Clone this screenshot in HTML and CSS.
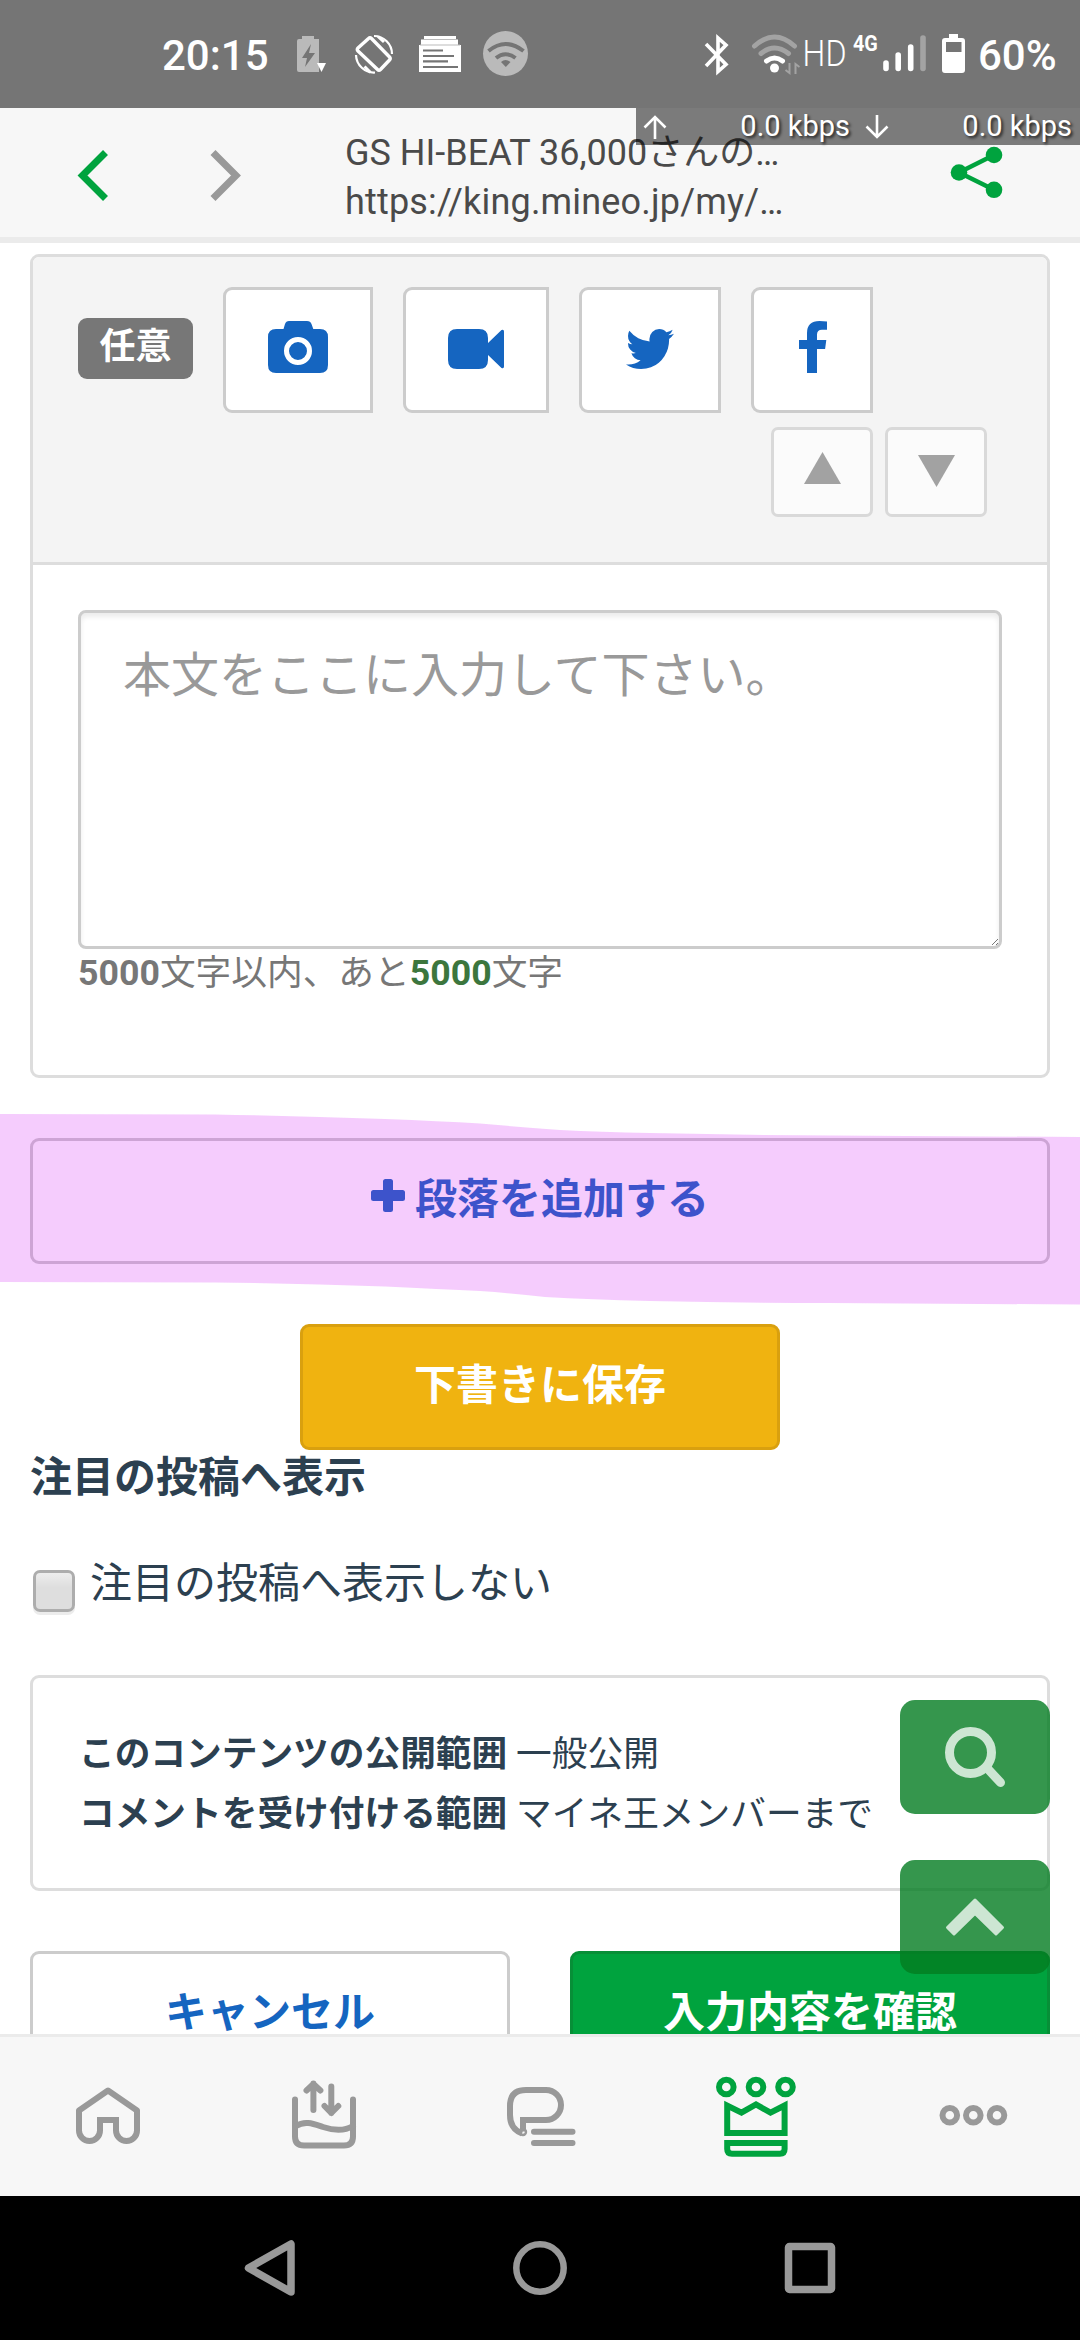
FILE: index.html
```html
<!DOCTYPE html>
<html lang="ja">
<head>
<meta charset="utf-8">
<title>マイネ王</title>
<link rel="stylesheet" href="styles.css">
</head>
<body>
<div class="screen">

  <header class="status">
    <span class="clock">20:15</span>
    <svg class="status-left" width="240" height="48" viewBox="292 30 240 48">
      <path fill="#bababa" d="M302 36h12v3h5v33h-20a2 2 0 0 1-2-2V41a2 2 0 0 1 2-2h3z"/>
      <path fill="#757575" d="M311 44l-9 14h5l-2 9 10-14h-6z"/>
      <path fill="#fff" d="M317 63h9l-4.500 9z"/>
      <g fill="none" stroke="#fff" stroke-width="3">
        <path d="M371.500 38.500l18 18.500q1.500 1.500 0 3l-9 9.500q-1.500 1.500-3 0L358 51q-1.500-1.500 0-3l10.500-9.500q1.500-1.500 3 0z" stroke-width="3.400"/>
        <path stroke-width="2.200" d="M374 36A18 18 0 0 1 392 54M375 72.500A18 18 0 0 1 356 55"/>
        <path d="M378 36.500l6 5.500M370.500 72.500l-6-6"/>
      </g>
      <path fill="#fff" d="M424 36h32v3h2v6h3v27h-42V45h2v-6h3z"/>
      <path stroke="#bbb" stroke-width="1" d="M421 39.500h37M420 45h40"/>
      <path stroke="#757575" stroke-width="2.200" d="M423 50.500h20M423 56h31M423 61.300h25M423 67h35"/>
      <circle cx="505.500" cy="53.500" r="22.500" fill="#bababa"/>
      <g fill="none" stroke="#757575" stroke-width="4">
        <path d="M488.500 51q17-14 35 0M496 58q9.500-7.500 19.500 0"/>
      </g>
      <path fill="#757575" d="M501 62q4.500-4 9.500 0l-4.700 5z"/>
    </svg>
    <svg class="status-bt" width="100" height="48" viewBox="700 30 100 48">
      <path fill="none" stroke="#fff" stroke-width="3.600" d="M706 44l20 20.500-8 7V38l8 7L706 66"/>
      <g fill="none" stroke="#fff" stroke-width="5" stroke-linecap="round">
        <path stroke="#a3a3a3" d="M754.500 46q20-18 40 0M761 53.500q13.500-11 27.500 0"/>
        <path d="M766.500 61q8-6 16 0"/>
      </g>
      <circle cx="774.500" cy="68" r="4.500" fill="#fff"/>
      <path fill="none" stroke="#a3a3a3" stroke-width="2" d="M789.500 63v10l-4-3M795.500 74V64l4 3"/>
    </svg>
    <span class="hd">HD</span>
    <span class="lte">4G</span>
    <svg class="status-sig" width="86" height="48" viewBox="882 30 86 48">
      <g stroke="#fff" stroke-width="5.600" stroke-linecap="round">
        <path d="M886 63v5.500M898.200 55v13.500M910.700 47v21.500"/>
        <path stroke="#a3a3a3" d="M923 38v30.500"/>
      </g>
      <path fill="#fff" fill-rule="evenodd" d="M949 34h9v4h4q3 0 3 3v29q0 3-3 3h-17q-3 0-3-3V41q0-3 3-3h4zM946 42v10h15.500V42z"/>
    </svg>
    <span class="pct">60%</span>
  </header>

  <nav class="browser">
    <svg class="arrows" width="170" height="56" viewBox="74 148 170 56">
      <path fill="none" stroke="#00a33e" stroke-width="7" d="M105.500 152.500L82.500 175.500l23 23"/>
      <path fill="none" stroke="#999" stroke-width="7" d="M213 152.500l23 23-23 23"/>
    </svg>
    <div class="page-title">
      <div>GS HI-BEAT 36,000さんの…</div>
      <div class="url">https://king.mineo.jp/my/…</div>
    </div>
    <svg class="share" width="54" height="54" viewBox="950 146 54 54">
      <path fill="none" stroke="#00a33e" stroke-width="4.500" d="M994 155l-35 17.500 35 17.300"/>
      <g fill="#00a33e"><circle cx="959" cy="172.500" r="8.300"/><circle cx="994" cy="155" r="8.300"/><circle cx="994" cy="189.800" r="8.300"/></g>
    </svg>
    <div class="speed">
      <svg width="24" height="26" viewBox="0 0 24 26"><path d="M12 25V3M1.500 13.500L12 3l10.500 10.500"/></svg>
      <span>0.0 kbps</span>
      <svg width="24" height="26" viewBox="0 0 24 26"><path d="M12 1v22M1.500 12.500L12 23l10.500-10.500"/></svg>
      <span>0.0 kbps</span>
    </div>
  </nav>

  <main class="page">
    <section class="editor">
      <div class="tools">
        <div class="row">
          <span class="badge">任意</span>
          <button class="tool camera"><svg width="60" height="52" viewBox="0 0 60 52"><path fill="#1565c0" fill-rule="evenodd" d="M21 0h18q3.500 0 4.500 3l1.800 5H52q8 0 8 8v28q0 8-8 8H8q-8 0-8-8V16q0-8 8-8h7.500L17 3q1-3 4-3zM30 16a14 14 0 1 0 0 28 14 14 0 0 0 0-28zM30 21a9 9 0 1 1 0 18 9 9 0 0 1 0-18z"/></svg></button>
          <button class="tool video"><svg width="56" height="40" viewBox="0 0 56 40"><path fill="#1565c0" d="M9 0h22q9 0 9 9v5L53.500 1q2.500-1 2.500 1.500v35q0 2.500-2.500 1.500L40 26v5q0 9-9 9H9q-9 0-9-9V9q0-9 9-9z"/></svg></button>
          <button class="tool twitter"><svg width="48" height="40" viewBox="108 256 1576 1280" preserveAspectRatio="none"><path fill="#1565c0" d="M1684 408q-67 98-162 167 1 14 1 42 0 130-38 259.500t-115.500 248.500-184.500 210.500-258 146-323 54.500q-271 0-496-145 35 4 78 4 225 0 401-138-105-2-188-64.500t-114-159.500q33 5 61 5 43 0 85-11-112-23-185.500-111.500t-73.500-205.500v-4q68 38 146 41-66-44-105-115t-39-154q0-88 44-163 121 149 294.500 238.500t371.500 99.500q-8-38-8-74 0-134 94.500-228.500t228.500-94.500q140 0 236 102 109-21 205-78-37 115-142 178 93-10 186-50z"/></svg></button>
          <button class="tool facebook"><svg width="28" height="52" viewBox="0 0 28 52"><path fill="#1565c0" d="M28 .4V8.700h-5q-5 0-5 4.800V19h9.300l-1.200 9H18v24H8V28H0v-9h8v-7Q8 0 20.500 0q5 0 7.500.4z"/></svg></button>
        </div>
        <div class="order">
          <button class="move"><svg width="37" height="32" viewBox="0 0 37 32"><path fill="#a2a2a2" d="M18.500 0L37 32H0z"/></svg></button>
          <button class="move down"><svg width="37" height="32" viewBox="0 0 37 32"><path fill="#a2a2a2" d="M0 0h37L18.500 32z"/></svg></button>
        </div>
      </div>
      <div class="body">
        <div class="textarea">本文をここに入力して下さい。
          <svg class="grip" width="8" height="8" viewBox="0 0 8 8"><path stroke="#777" d="M1 7l6-6M5 7l2-2"/></svg>
        </div>
        <p class="count"><b>5000</b>文字以内、あと<b class="left">5000</b>文字</p>
      </div>
    </section>

    <button class="btn add"><svg width="34" height="33" viewBox="0 0 34 33"><path fill="#1565c0" d="M14.500 0h5q2.500 0 2.500 2.500V11h9.500Q34 11 34 13.500v6q0 2.500-2.500 2.500H22v8.500q0 2.500-2.500 2.500h-5Q12 33 12 30.500V22H2.500Q0 22 0 19.500v-6Q0 11 2.500 11H12V2.500Q12 0 14.500 0z"/></svg>段落を追加する</button>
    <button class="btn save">下書きに保存</button>

    <h2 class="heading">注目の投稿へ表示</h2>
    <label class="check"><span class="box"></span>注目の投稿へ表示しない</label>

    <section class="scope">
      <p><b>このコンテンツの公開範囲</b> 一般公開</p>
      <p><b>コメントを受け付ける範囲</b> マイネ王メンバーまで</p>
    </section>

    <div class="actions">
      <button class="btn cancel">キャンセル</button>
      <button class="btn confirm">入力内容を確認</button>
    </div>

    <svg class="marker" width="1080" height="200" viewBox="0 1110 1080 200">
      <path fill="rgb(208,18,246)" fill-opacity=".215" d="M0 1114L215 1114.500Q300 1116 385 1119 440 1121 480 1123.500 520 1127 560 1130 600 1132 650 1133 740 1135 830 1135.500L1080 1137V1304.500L830 1303Q740 1303 650 1301 590 1299.500 545 1297 510 1293 480 1291 440 1289 385 1286.500 300 1283.500 215 1282.500L0 1282z"/>
    </svg>
    <div class="floats">
      <button class="float"><svg width="62" height="62" viewBox="0 0 62 62"><circle cx="26.500" cy="26.500" r="21" fill="none" stroke="#cde6d3" stroke-width="9"/><path stroke="#cde6d3" stroke-width="9" stroke-linecap="round" d="M43 42l13.500 14.500"/></svg></button>
      <button class="float"><svg width="60" height="40" viewBox="0 0 60 40"><path fill="#cde6d3" stroke="#cde6d3" stroke-width="3" stroke-linejoin="round" d="M30 3L57.500 30.500 51 37 30 16.500 9 37 2.500 30.500z"/></svg></button>
    </div>
  </main>

  <nav class="tabs">
    <svg viewBox="0 0 216 159"><path stroke-linejoin="round" d="M116 93V92v1.500a10.500 10.500 0 0 0 21 0V73.500L108 53.500 79 73.500V93.500a10.500 10.500 0 0 0 21 0"/><path d="M116 94V83H100v11"/></svg>
    <svg viewBox="0 0 216 159"><g stroke-linecap="round" stroke-linejoin="round"><path d="M79 62.500v37q0 9 9 9h40q9 0 9-9v-37"/><path d="M80 89c9-6 18-2 27 1s20 5 30-1"/><path d="M97.400 73V46.500M90.500 53.500l6.900-6.500 7 6.500M115.300 49.500V76M108.500 69l6.800 7 7-7"/></g></svg>
    <svg viewBox="0 0 216 159"><path d="M91 94.500V83h23a15 15 0 0 0 0-30H94q-16 0-16 16v9q0 14 12 18.500" stroke-linecap="butt"/><path stroke-linecap="round" d="M102 94.700h38.500M102 106h38.500"/><circle cx="91" cy="95" r="1.200"/></svg>
    <svg class="on" viewBox="0 0 216 159"><circle cx="78.300" cy="50" r="7.300"/><circle cx="108" cy="50" r="7.300"/><circle cx="137.500" cy="50" r="7.300"/><path d="M79.200 96V68.500l14.300 7.200 14.500-8.200 14.500 8.200 14.100-7.200V96zM79.200 106h57.400v6q0 4.700-4.700 4.700H83.900q-4.700 0-4.700-4.700z"/></svg>
    <svg viewBox="0 0 216 159"><circle cx="85.800" cy="78.300" r="7.300"/><circle cx="109.300" cy="78.300" r="7.300"/><circle cx="133" cy="78.300" r="7.300"/></svg>
  </nav>

  <footer class="sysnav">
    <svg width="60" height="60" viewBox="0 0 60 60"><path stroke-width="7.500" stroke-linejoin="round" d="M8.500 30L51 6v48z"/></svg>
    <svg width="60" height="60" viewBox="0 0 60 60"><circle cx="30" cy="30" r="23.700" stroke-width="6.500"/></svg>
    <svg width="60" height="60" viewBox="0 0 60 60"><rect x="8.500" y="8.500" width="43" height="43" stroke-width="7.500" rx="1" stroke-linejoin="round"/></svg>
  </footer>
</div>
</body>
</html>
```
FILE: styles.css
```css
* { box-sizing: border-box; margin: 0; padding: 0; }

body {
  background: #fff;
  font-family: Roboto, "Noto Sans CJK JP", sans-serif;
  color: #2c4050;
}

button {
  font: inherit;
  display: flex;
  align-items: center;
  justify-content: center;
}

svg { display: block; flex: none; }

.screen {
  width: 1080px;
  height: 2340px;
  display: flex;
  flex-direction: column;
  overflow: hidden;
}

/* status bar */
.status {
  height: 108px;
  flex: none;
  display: flex;
  align-items: center;
  padding-left: 161px;
  background: #757575;
  color: #fff;
  line-height: 48px;
  white-space: nowrap;
}
.clock, .pct { font-size: 42px; font-weight: 500; padding-top: 3px; }
.clock { width: 131px; padding-left: 1px; }
.status-left { margin-right: 168px; }
.hd {
  width: 52px;
  padding-left: 3px;
  font-size: 37px;
  font-weight: 300;
  transform: scaleX(.87);
  transform-origin: 0 50%;
}
.lte {
  width: 30px;
  padding-left: 1px;
  margin-top: -20px;
  font-size: 22px;
  font-weight: 700;
  transform: scaleX(.9);
  transform-origin: 0 50%;
}
.status-sig { margin-right: 10px; }

/* browser bar */
.browser {
  position: relative;
  height: 135px;
  flex: none;
  display: flex;
  align-items: flex-start;
  background: #f7f7f7;
  border-bottom: 6px solid #ebebeb;
}
.arrows { margin: 40px 101px 0 74px; }
.page-title {
  width: 605px;
  padding-top: 21px;
  font-size: 36px;
  line-height: 49px;
  color: #4a4a4a;
  white-space: nowrap;
}
.url { letter-spacing: .18px; }
.share { margin-top: 38px; }
.speed {
  position: absolute;
  top: 0;
  right: 0;
  width: 444px;
  height: 37px;
  display: flex;
  align-items: center;
  padding: 0 8px 0 7px;
  background: rgba(0, 0, 0, .5);
  color: #fff;
  font-size: 29px;
  line-height: 37px;
  white-space: nowrap;
  text-shadow: 2px 2px 3px rgba(0, 0, 0, .7);
}
.speed svg { fill: none; stroke: #fff; stroke-width: 2.6; }
.speed span { width: 183px; text-align: right; }
.speed span + svg { margin-left: 15px; }
.speed svg + span:last-child { width: auto; margin-left: auto; }

/* page */
.page {
  position: relative;
  flex: none;
  height: 1791px;
  padding: 11px 30px 0;
  overflow: hidden;
}

.editor {
  height: 824px;
  border: 3px solid #ddd;
  border-radius: 9px;
  overflow: hidden;
}
.tools {
  height: 305px;
  padding: 30px 60px 0 45px;
  background: #f4f4f4;
}
.row { display: flex; gap: 30px; }
.badge {
  width: 115px;
  height: 61px;
  margin-top: 31px;
  border-radius: 9px;
  background: #777;
  color: #fff;
  font-size: 36px;
  font-weight: 700;
  line-height: 58px;
  text-align: center;
}
.tool {
  height: 126px;
  padding-bottom: 6px;
  border: 3px solid #ccc;
  border-radius: 9px 0 0 9px;
  background: #fff;
}
.camera { width: 150px; }
.video { width: 146px; padding-bottom: 2px; }
.twitter { width: 142px; padding-bottom: 2px; }
.facebook { width: 122px; padding-left: 2px; }
.order {
  display: flex;
  justify-content: flex-end;
  gap: 12px;
  margin-top: 14px;
}
.move {
  width: 102px;
  height: 90px;
  padding-bottom: 8px;
  border: 3px solid #d9d9d9;
  border-radius: 7px;
  background: #fbfbfb;
}
.down { padding-bottom: 2px; }

.body {
  padding: 45px 45px 0;
  border-top: 3px solid #ddd;
}
.textarea {
  position: relative;
  height: 339px;
  padding: 27px 42px;
  border: 3px solid #ccc;
  border-radius: 8px;
  box-shadow: inset 0 4px 5px rgba(0, 0, 0, .08);
  color: #999;
  font-size: 48px;
  line-height: 72px;
}
.grip { position: absolute; right: 0; bottom: 0; }
.count {
  font-size: 35.7px;
  line-height: 48px;
  color: #777;
}
.left { color: #3c763d; }

.btn {
  height: 126px;
  padding-bottom: 11px;
  border: 3px solid #ccc;
  border-radius: 9px;
  background: #fff;
  color: #1565c0;
  font-size: 42px;
  font-weight: 700;
}
.add {
  width: 100%;
  margin-top: 60px;
  gap: 10px;
}
.save {
  width: 480px;
  margin: 60px auto 0;
  border-color: #d9a00f;
  background: #f0b310;
  color: #fff;
}

.heading {
  height: 60px;
  font-size: 42px;
  line-height: 56px;
}
.check {
  display: flex;
  height: 90px;
  margin-top: 43px;
  padding-left: 3px;
  font-size: 42px;
  line-height: 61px;
}
.box {
  width: 42px;
  height: 42px;
  margin: 17px 15px 0 0;
  border: 3px solid #adadad;
  border-radius: 7px;
  background: linear-gradient(#ededed, #dedede 40%, #dedede);
  box-shadow: 0 3px 0 #ececec;
}

.scope {
  height: 216px;
  margin-top: 32px;
  padding: 46px 46px;
  border: 3px solid #ddd;
  border-radius: 9px;
  font-size: 35.7px;
  line-height: 60px;
}

.actions {
  display: flex;
  justify-content: space-between;
  margin-top: 60px;
}
.actions .btn { width: 480px; }
.actions .confirm {
  border-color: #078f37;
  background: #00a33e;
  color: #fff;
}

.marker { position: absolute; left: 0; top: 867px; }
.floats {
  position: absolute;
  right: 30px;
  top: 1457px;
  display: grid;
  gap: 46px;
}
.float {
  width: 150px;
  height: 114px;
  border: 0;
  border-radius: 15px;
  background: rgba(3, 124, 32, .8);
}

/* tabs */
.tabs {
  flex: none;
  height: 162px;
  display: grid;
  grid-template-columns: repeat(5, 216px);
  border-top: 3px solid #ebebeb;
  background: #f7f7f7;
}
.tabs svg {
  width: 216px;
  height: 159px;
  fill: none;
  stroke: #999;
  stroke-width: 6;
}
.tabs .on { stroke: #00a33e; }

.sysnav {
  flex: none;
  height: 144px;
  display: flex;
  justify-content: center;
  align-items: center;
  gap: 210px;
  background: #000;
}
.sysnav svg { fill: none; stroke: #999; }
```
